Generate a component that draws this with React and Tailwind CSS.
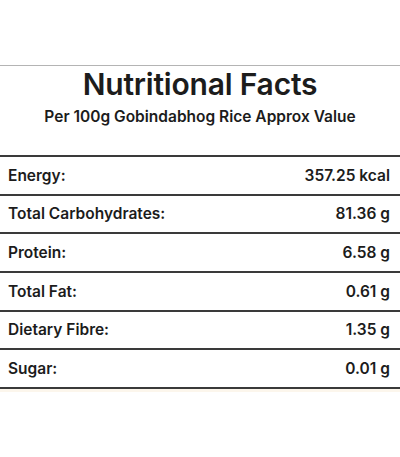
import React from "react";

const rows = [
  { label: "Energy:", value: "357.25 kcal" },
  { label: "Total Carbohydrates:", value: "81.36 g" },
  { label: "Protein:", value: "6.58 g" },
  { label: "Total Fat:", value: "0.61 g" },
  { label: "Dietary Fibre:", value: "1.35 g" },
  { label: "Sugar:", value: "0.01 g" },
];

const App = () => {
  return (
    <div
      className="w-[400px] h-[457px] bg-white text-[#1c1c1c] pt-[65px]"
      style={{ fontFamily: "Inter, 'Noto Sans', sans-serif" }}
    >
      <div className="border-t border-[#b4b4b4]">
        <h1 className="pt-[1px] text-center text-[30px] leading-[34px] font-semibold tracking-[-0.2px]">
          Nutritional Facts
        </h1>
        <p className="mt-[5px] text-center text-[15.5px] leading-[22px] font-semibold">
          Per 100g Gobindabhog Rice Approx Value
        </p>
      </div>

      <div className="mt-[27px]">
        {rows.map((r) => (
          <div
            key={r.label}
            className="box-border h-[38.67px] border-t-2 border-[#3a3a3a] flex items-center justify-between pl-2 pr-[10px] text-[15.5px] font-semibold"
          >
            <span>{r.label}</span>
            <span>{r.value}</span>
          </div>
        ))}
        <div className="border-t-2 border-[#3a3a3a]" />
        <div className="h-[3px] bg-[#fcf6ec]" />
      </div>
    </div>
  );
};

export default App;
